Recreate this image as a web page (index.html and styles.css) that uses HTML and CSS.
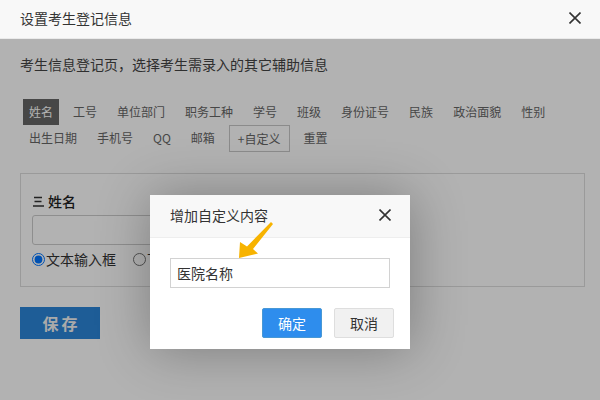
FILE: index.html
```html
<!DOCTYPE html>
<html lang="zh-CN">
<head>
<meta charset="utf-8">
<title>设置考生登记信息</title>
<link rel="stylesheet" href="styles.css">
</head>
<body>
<div class="top">
  <div class="top-title">设置考生登记信息</div>
  <span class="top-close">
    <svg width="12" height="12" viewBox="0 0 12 12"><path d="M0.5 0.5 L11.5 11.5 M11.5 0.5 L0.5 11.5" stroke="#333" stroke-width="1.6" fill="none"/></svg>
  </span>
</div>
<div class="stage">
  <div class="page">
    <p class="desc">考生信息登记页，选择考生需录入的其它辅助信息</p>
    <div class="tags">
      <span class="tag active">姓名</span>
      <span class="tag">工号</span>
      <span class="tag">单位部门</span>
      <span class="tag">职务工种</span>
      <span class="tag">学号</span>
      <span class="tag">班级</span>
      <span class="tag">身份证号</span>
      <span class="tag">民族</span>
      <span class="tag">政治面貌</span>
      <span class="tag">性别</span>
      <span class="tag">出生日期</span>
      <span class="tag">手机号</span>
      <span class="tag">QQ</span>
      <span class="tag">邮箱</span>
      <span class="tag custom">+自定义</span>
      <span class="tag">重置</span>
    </div>
    <div class="field-box">
      <div class="field-label">
        <svg class="menu-icon" width="11" height="11" viewBox="0 0 11 11"><path d="M1 1.5 H9 M1.5 5.5 H8.5 M0 10 H11" stroke="#333" stroke-width="1.3" fill="none"/></svg>
        <span>姓名</span>
      </div>
      <div class="field-input"></div>
      <div class="radios">
        <label class="radio"><input type="radio" name="t" checked>文本输入框</label>
        <label class="radio"><input type="radio" name="t">下拉</label>
      </div>
    </div>
    <button class="save">保存</button>
  </div>
  <div class="shade"></div>
  <div class="dialog">
    <div class="dialog-head">
      <span class="dialog-title">增加自定义内容</span>
      <span class="dialog-close">
        <svg width="12" height="12" viewBox="0 0 12 12"><path d="M0.5 0.5 L11.5 11.5 M11.5 0.5 L0.5 11.5" stroke="#333" stroke-width="1.6" fill="none"/></svg>
      </span>
    </div>
    <div class="dialog-body">
      <div class="dialog-input">医院名称</div>
    </div>
    <div class="dialog-btns">
      <span class="btn btn-ok">确定</span>
      <span class="btn btn-cancel">取消</span>
    </div>
    <svg class="arrow" width="50" height="50" viewBox="0 0 50 50"><path d="M41 7 L43 9 L23 34 L28 38.5 L9 43 L10 27 L17 31.5 Z" fill="#f7b300"/></svg>
  </div>
</div>
</body>
</html>
```
FILE: styles.css
```css
html, body {
  margin: 0;
  padding: 0;
  background: #fff;
  overflow: hidden;
}
body {
  font-family: "Noto Sans CJK SC", "Liberation Sans", sans-serif;
  color: #333;
  font-size: 14px;
}
.top {
  height: 38px;
  background: #f8f8f8;
  border-bottom: 1px solid #eaeaea;
  display: flex;
  align-items: center;
  justify-content: space-between;
  padding: 0 19px 0 20px;
}
.top-title {
  font-size: 14px;
  line-height: 20px;
  margin-top: -3px;
  color: #333;
}
.top-close {
  display: flex;
  margin-top: -3px;
}
.stage {
  position: relative;
  height: calc(100vh - 39px);
}
.page {
  padding: 13px 15px 0 20px;
}
.desc {
  margin: 0;
  line-height: 24px;
  font-size: 14px;
  color: #444;
}
.tags {
  display: flex;
  flex-wrap: wrap;
  margin: 23px 0 0 3px;
  font-size: 12px;
  color: #666;
}
.tag {
  height: 26px;
  line-height: 26px;
  padding: 0 6px;
  margin-right: 8px;
  box-sizing: border-box;
}
.tag.active {
  background: #666;
  color: #fff;
}
.tag.custom {
  height: 27px;
  line-height: 25px;
  border: 1px solid #c8c8c8;
  padding: 0 8px;
}
.field-box {
  margin-top: 21px;
  border: 1px solid #ddd;
  padding: 17px 11px 13px;
}
.field-label {
  display: flex;
  align-items: center;
  gap: 4px;
  line-height: 20px;
  font-size: 14px;
  font-weight: 500;
  color: #222;
  margin-left: 1px;
}
.menu-icon {
  display: block;
}
.field-input {
  margin-top: 4px;
  width: 340px;
  height: 30px;
  box-sizing: border-box;
  border: 1px solid #ccc;
  border-radius: 3px;
  background: #fff;
}
.radios {
  display: flex;
  gap: 17px;
  height: 28px;
  align-items: center;
}
.radio {
  display: flex;
  align-items: center;
  font-size: 14px;
  color: #333;
}
.radio input {
  width: 13px;
  height: 13px;
  margin: 0 1px 0 0;
}
.save {
  margin-top: 20px;
  width: 80px;
  height: 32px;
  border: none;
  background: #2b86d8;
  color: #f4f4f4;
  font-family: "Noto Sans CJK SC", sans-serif;
  font-size: 16px;
  font-weight: bold;
  letter-spacing: 3px;
  padding: 0 0 0 3px;
  display: block;
}
.shade {
  position: absolute;
  inset: 0;
  background: rgba(0, 0, 0, 0.3);
}
.dialog {
  position: absolute;
  left: 150px;
  top: 156px;
  width: 260px;
  background: #fff;
  box-shadow: 1px 1px 50px rgba(0, 0, 0, 0.3);
  padding-bottom: 11px;
}
.dialog-head {
  height: 42px;
  background: #f8f8f8;
  border-bottom: 1px solid #eee;
  display: flex;
  align-items: center;
  justify-content: space-between;
  padding: 0 19px 0 20px;
}
.dialog-title {
  font-size: 14px;
  line-height: 20px;
  color: #333;
  margin-top: -2px;
}
.dialog-close {
  display: flex;
  margin-top: -2px;
}
.dialog-body {
  padding: 20px 20px 0;
}
.dialog-input {
  height: 30px;
  box-sizing: border-box;
  border: 1px solid #d2d2d2;
  padding-left: 6px;
  line-height: 28px;
  font-size: 14px;
  color: #333;
}
.dialog-btns {
  display: flex;
  justify-content: flex-end;
  gap: 12px;
  padding: 20px 16px 0 0;
}
.btn {
  width: 60px;
  height: 30px;
  box-sizing: border-box;
  line-height: 28px;
  text-align: center;
  font-size: 14px;
  border-radius: 2px;
  border: 1px solid #dedede;
}
.btn-ok {
  background: #2e8ded;
  border-color: #4898d5;
  color: #fff;
}
.btn-cancel {
  background: #f1f1f1;
  color: #333;
}
.arrow {
  position: absolute;
  left: 80px;
  top: 20px;
}
```
